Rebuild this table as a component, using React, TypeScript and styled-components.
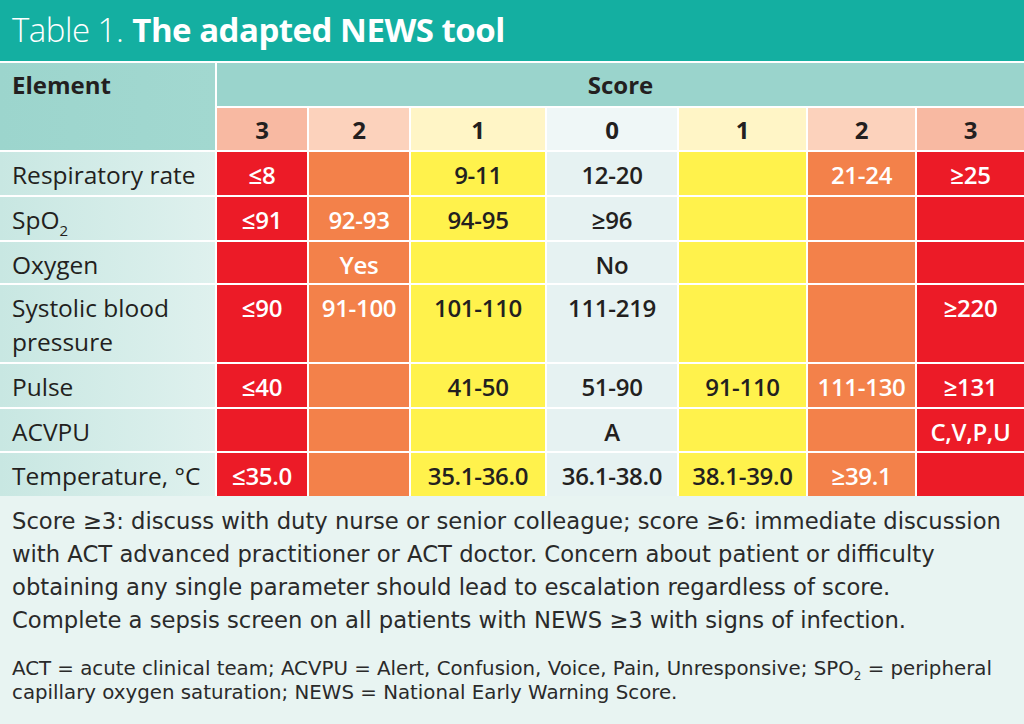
import styled, { createGlobalStyle } from 'styled-components';

type Tone = 'red' | 'orange' | 'yellow' | 'zero';

const GlobalStyle = createGlobalStyle`
    html, body {
        margin: 0;
        padding: 0;
        background: #fff;
    }
    body {
        font-family: "Open Sans", "Liberation Sans", sans-serif;
        color: #231f20;
    }
`;

const columnTones: Tone[] = ['red', 'orange', 'yellow', 'zero', 'yellow', 'orange', 'red'];
const scores = [3, 2, 1, 0, 1, 2, 3];

const rows: { label: React.ReactNode; values: string[] }[] = [
    { label: 'Respiratory rate', values: ['≤8', '', '9-11', '12-20', '', '21-24', '≥25'] },
    { label: <>SpO<sub>2</sub></>, values: ['≤91', '92-93', '94-95', '≥96', '', '', ''] },
    { label: 'Oxygen', values: ['', 'Yes', '', 'No', '', '', ''] },
    { label: <>Systolic blood<br />pressure</>, values: ['≤90', '91-100', '101-110', '111-219', '', '', '≥220'] },
    { label: 'Pulse', values: ['≤40', '', '41-50', '51-90', '91-110', '111-130', '≥131'] },
    { label: 'ACVPU', values: ['', '', '', 'A', '', '', 'C,V,P,U'] },
    { label: 'Temperature, °C', values: ['≤35.0', '', '35.1-36.0', '36.1-38.0', '38.1-39.0', '≥39.1', ''] },
];

const cellColors: Record<Tone, { bg: string; fg: string; head: string }> = {
    red: { bg: '#ec1b27', fg: '#ffffff', head: '#f8b9a2' },
    orange: { bg: '#f3814a', fg: '#ffffff', head: '#fcd2bc' },
    yellow: { bg: '#fff24c', fg: '#231f20', head: '#fff5c6' },
    zero: { bg: '#e6f2f2', fg: '#231f20', head: '#eff7f7' },
};

const App = () => {
    return (
        <Page>
            <GlobalStyle />
            <TitleBar>
                <TitleLight>Table 1.</TitleLight>
                <TitleBold>The adapted NEWS tool</TitleBold>
            </TitleBar>
            <Grid>
                <ElementHead>Element</ElementHead>
                <ScoreHead>Score</ScoreHead>
                {scores.map((s, i) => (
                    <ScoreCell key={i} $tone={columnTones[i]}>{s}</ScoreCell>
                ))}
                {rows.map((row, r) => (
                    <Row key={r}>
                        <LabelCell>{row.label}</LabelCell>
                        {row.values.map((v, i) => (
                            <ValueCell key={i} $tone={columnTones[i]}>{v}</ValueCell>
                        ))}
                    </Row>
                ))}
            </Grid>
            <Footer>
                <Notes>
                    Score ≥3: discuss with duty nurse or senior colleague; score ≥6: immediate discussion<br />
                    with ACT advanced practitioner or ACT doctor. Concern about patient or difficulty<br />
                    obtaining any single parameter should lead to escalation regardless of score.<br />
                    Complete a sepsis screen on all patients with NEWS ≥3 with signs of infection.
                </Notes>
                <Abbrev>
                    ACT = acute clinical team; ACVPU = Alert, Confusion, Voice, Pain, Unresponsive; SPO<sub>2</sub> = peripheral<br />
                    capillary oxygen saturation; NEWS = National Early Warning Score.
                </Abbrev>
            </Footer>
        </Page>
    );
};

export default App;

const Page = styled.div`
    width: 1024px;
    height: 724px;
    overflow: hidden;
    background: #fff;
`;

const TitleBar = styled.div`
    height: 61px;
    background: #14afa1;
    display: flex;
    align-items: center;
    gap: 9px;
    padding: 0 0 2px 12px;
    box-sizing: border-box;
    color: #fff;
    font-size: 33px;
    letter-spacing: -0.5px;
`;

const TitleLight = styled.span`
    font-weight: 300;
`;

const TitleBold = styled.span`
    font-weight: 700;
`;

const Grid = styled.div`
    display: grid;
    grid-template-columns: 215px 90px 100px 134px 130px 127px 107px 1fr;
    grid-template-rows: 43px 42px 43px 43px 41px 77px 43px 42px 43px;
    gap: 2px;
    padding-top: 2px;
    background: #fff;
`;

const Row = styled.div`
    display: contents;
`;

const ElementHead = styled.div`
    grid-row: 1 / 3;
    grid-column: 1;
    background: linear-gradient(90deg, #9cd5cd, #a2d8d0);
    font-weight: 700;
    font-size: 24px;
    padding: 5px 12px 0;
    line-height: 34px;
`;

const ScoreHead = styled.div`
    grid-row: 1;
    grid-column: 2 / 9;
    background: #9ad4cc;
    font-weight: 700;
    font-size: 24px;
    display: flex;
    justify-content: center;
    align-items: center;
`;

const ScoreCell = styled.div<{ $tone: Tone }>`
    background: ${(p) => cellColors[p.$tone].head};
    font-weight: 700;
    font-size: 24px;
    display: flex;
    justify-content: center;
    align-items: center;
`;

const LabelCell = styled.div`
    background: linear-gradient(90deg, #c8e7e2, #dff1ee);
    font-size: 24.5px;
    line-height: 34px;
    padding: 6px 12px 0;
    white-space: nowrap;

    sub {
        font-size: 15px;
        vertical-align: -7px;
        line-height: 0;
    }
`;

const ValueCell = styled.div<{ $tone: Tone }>`
    background: ${(p) => cellColors[p.$tone].bg};
    color: ${(p) => cellColors[p.$tone].fg};
    font-weight: 600;
    font-size: 24px;
    line-height: 34px;
    padding-top: 6px;
    text-align: center;
    white-space: nowrap;
    letter-spacing: -0.3px;
`;

const Footer = styled.div`
    background: #e8f4f2;
    height: 228px;
    padding: 9px 12px 0;
    color: #2a2a2a;
    font-family: "DejaVu Sans", "Open Sans", sans-serif;
    white-space: nowrap;
`;

const Notes = styled.p`
    margin: 0;
    font-size: 22.7px;
    line-height: 33px;
`;

const Abbrev = styled.p`
    margin: 20px 0 0;
    font-size: 19.8px;
    line-height: 24px;

    sub {
        font-size: 12px;
        vertical-align: -5px;
        line-height: 0;
    }
`;
